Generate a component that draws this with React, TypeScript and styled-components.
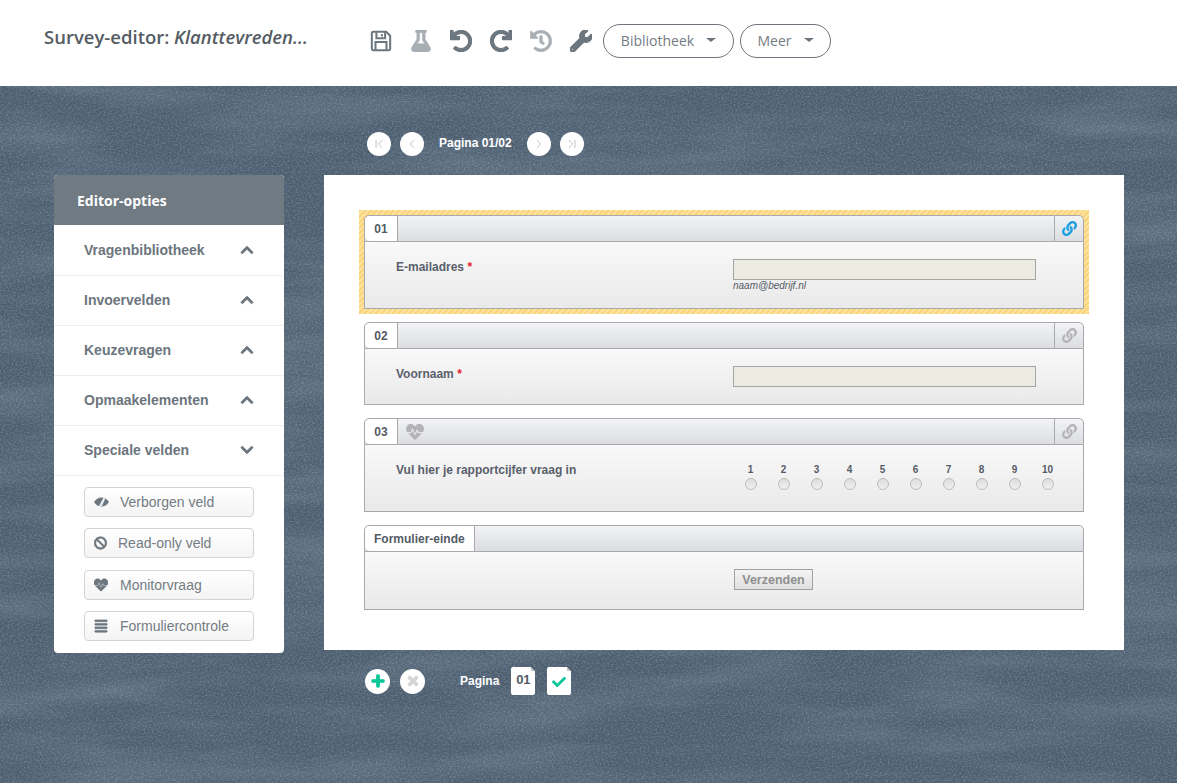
import type { ReactNode } from 'react';
import styled, { createGlobalStyle } from 'styled-components';
import {
  FaAlignJustify,
  FaBan,
  FaCheck,
  FaChevronDown,
  FaChevronUp,
  FaFlask,
  FaHeartbeat,
  FaHistory,
  FaLink,
  FaPlus,
  FaRedo,
  FaTimes,
  FaUndo,
  FaWrench,
} from 'react-icons/fa';
import { ChevronFirst, ChevronLast, ChevronLeft, ChevronRight } from 'lucide-react';

const slate = `url("data:image/svg+xml,%3Csvg xmlns='http://www.w3.org/2000/svg' width='1177' height='700'%3E%3Cfilter id='a'%3E%3CfeTurbulence type='fractalNoise' baseFrequency='.005 .03' numOctaves='4' seed='7'/%3E%3CfeColorMatrix values='0 0 0 0 .2 0 0 0 0 .26 0 0 0 0 .32 0 0 0 .9 -.36'/%3E%3C/filter%3E%3Cfilter id='b'%3E%3CfeTurbulence type='fractalNoise' baseFrequency='.5 .65' numOctaves='3' seed='3'/%3E%3CfeColorMatrix values='0 0 0 0 .56 0 0 0 0 .64 0 0 0 0 .72 0 0 0 .6 -.24'/%3E%3C/filter%3E%3Crect width='1177' height='700' filter='url(%23a)'/%3E%3Crect width='1177' height='700' filter='url(%23b)'/%3E%3C/svg%3E")`;

const GlobalStyle = createGlobalStyle`
  html, body {
    margin: 0;
    padding: 0;
    height: 100%;
  }
  body {
    font-family: "Liberation Sans", Arial, sans-serif;
    overflow: hidden;
  }
`;

// layout
const Page = styled.div`
  display: flex;
  flex-direction: column;
  width: 1177px;
  height: 783px;
`;

const Main = styled.main`
  flex: 1;
  display: flex;
  align-items: flex-start;
  gap: 40px;
  padding-left: 54px;
  background-color: #4c5e70;
  background-image: ${slate};
`;

// header
const Header = styled.header`
  display: flex;
  align-items: center;
  height: 86px;
  padding-left: 44px;
  background: #fff;
`;

const Title = styled.h1`
  width: 326px;
  margin: 0 0 14px;
  font-family: "Open Sans", sans-serif;
  font-size: 18.5px;
  font-weight: 600;
  color: #555c63;
  white-space: nowrap;

  em {
    font-weight: 600;
  }
`;

const Tools = styled.div`
  display: flex;
  align-items: center;
  margin-top: -4px;
`;

const Tool = styled.span<{ $muted?: boolean }>`
  display: flex;
  justify-content: center;
  width: 22px;
  margin-right: 18px;
  font-size: 22px;
  color: ${(p) => (p.$muted ? '#a7aeb4' : '#6c767e')};

  &:last-of-type {
    margin-right: 11px;
  }

  svg {
    stroke: currentColor;
    stroke-width: ${(p) => (p.$muted ? 12 : 24)}px;
  }
`;

const MenuButton = styled.button<{ $width: number }>`
  display: flex;
  align-items: center;
  justify-content: center;
  gap: 12px;
  width: ${(p) => p.$width}px;
  height: 34px;
  margin-right: 6px;
  padding: 0 0 2px;
  background: #fff;
  border: 1px solid #6c757d;
  border-radius: 17px;
  font-family: "Open Sans", sans-serif;
  font-size: 14px;
  color: #737c84;

  &::after {
    content: '';
    border-top: 4.5px solid #6c757d;
    border-left: 5px solid transparent;
    border-right: 5px solid transparent;
  }
`;

// sidebar
const Sidebar = styled.aside`
  width: 230px;
  margin-top: 89px;
  background: #fff;
  border-radius: 4px;
  overflow: hidden;
`;

const SidebarTitle = styled.div`
  height: 50px;
  margin-bottom: 1px;
  padding-left: 23px;
  background: #6f7a82;
  font-family: "Open Sans", sans-serif;
  font-size: 14px;
  font-weight: 700;
  line-height: 52px;
  color: #fff;
`;

const SectionRow = styled.div`
  display: flex;
  align-items: center;
  justify-content: space-between;
  height: 50px;
  padding: 0 30px 2px;
  border-bottom: 1px solid #eeeeee;
  box-sizing: border-box;
  font-size: 14px;
  font-weight: 700;
  color: #6c757d;

  svg {
    font-size: 14px;
    stroke: currentColor;
    stroke-width: 30px;
  }
`;

const FieldList = styled.div`
  display: flex;
  flex-direction: column;
  gap: 11.33px;
  padding: 11px 30px 12px;
`;

const FieldButton = styled.button`
  display: flex;
  align-items: center;
  width: 170px;
  height: 30px;
  padding: 0 9px;
  background: linear-gradient(#ffffff, #f4f4f4);
  border: 1px solid #d4d4d4;
  border-radius: 4px;
  font-family: "Liberation Sans", sans-serif;
  font-size: 14px;
  color: #737c84;
`;

const FieldIcon = styled.span<{ $width: number }>`
  display: flex;
  flex: none;
  width: ${(p) => p.$width}px;
  margin-right: 11px;
  font-size: 14px;
  color: #6c767e;

  svg {
    stroke: currentColor;
    stroke-width: 24px;
  }
`;

const HiddenEye = styled.svg`
  && {
    stroke-width: 0;
  }
`;

// survey
const Column = styled.div`
  display: flex;
  flex-direction: column;
  width: 800px;
`;

const PagerRow = styled.nav`
  display: flex;
  align-items: center;
  gap: 9px;
  height: 89px;
  padding: 27px 0 0 43px;
  box-sizing: border-box;
  color: #fff;
`;

const RoundButton = styled.span`
  display: flex;
  align-items: center;
  justify-content: center;
  width: 24px;
  height: 24px;
  flex: none;
  background: #fff;
  border-radius: 50%;
  color: #b5b5b5;
`;

const PagerLabel = styled.span`
  margin: -3px 6px 0 6px;
  font-size: 12px;
  font-weight: 700;
  white-space: nowrap;
`;

const Canvas = styled.section`
  display: flex;
  flex-direction: column;
  gap: 13px;
  height: 475px;
  padding: 40px;
  box-sizing: border-box;
  background: #fff;
`;

const Block = styled.article<{ $selected?: boolean }>`
  position: relative;

  ${(p) =>
    p.$selected &&
    `&::before {
      content: '';
      position: absolute;
      inset: -5px;
      background: repeating-linear-gradient(135deg, #fbd477 0 2px, #fde3a2 2px 4px);
    }`}
`;

const BlockHead = styled.div`
  position: relative;
  display: flex;
  align-items: stretch;
  height: 27px;
  box-sizing: border-box;
  background: linear-gradient(#f2f3f5, #dcdde1);
  border: 1px solid #a9a9ad;
  border-radius: 5px 5px 0 0;
`;

const BlockTab = styled.span`
  display: flex;
  align-items: center;
  justify-content: center;
  min-width: 33px;
  padding: 0 9px;
  box-sizing: border-box;
  background: #fff;
  border-right: 1px solid #a9a9ad;
  border-radius: 5px 0 0 5px;
  font-size: 12px;
  font-weight: 700;
  color: #555b66;
`;

const MonitorIcon = styled.span`
  display: flex;
  align-items: center;
  margin-left: 8px;
  font-size: 18px;
  color: #b3b3b5;
`;

const LinkCell = styled.span<{ $active?: boolean }>`
  display: flex;
  align-items: center;
  justify-content: center;
  width: 28px;
  margin-left: auto;
  border-left: 1px solid #a9a9ad;
  font-size: 15px;
  color: ${(p) => (p.$active ? '#1c9fe2' : '#b5b5b7')};
`;

const BlockBody = styled.div<{ $height: number }>`
  position: relative;
  display: flex;
  height: ${(p) => p.$height}px;
  padding: 17px 0 0 31px;
  box-sizing: border-box;
  background: linear-gradient(#f9f9f9, #e9e9ea);
  border: 1px solid #a9a9ad;
  border-top: 0;
`;

const FieldLabel = styled.label`
  width: 337px;
  flex: none;
  font-size: 12px;
  font-weight: 700;
  line-height: 16px;
  color: #5a606b;

  b {
    color: #e8222c;
  }
`;

const InputGroup = styled.div`
  display: flex;
  flex-direction: column;
`;

const TextInput = styled.div`
  width: 303px;
  height: 21px;
  box-sizing: border-box;
  background: #ecebe2;
  border: 1px solid #a5a5a5;
`;

const Hint = styled.span`
  font-size: 10px;
  font-style: italic;
  line-height: 12px;
  color: #555b66;
`;

const Scale = styled.div`
  display: flex;
  margin-left: 1px;
  padding-top: 1px;
`;

const ScaleItem = styled.div`
  display: flex;
  flex-direction: column;
  align-items: center;
  gap: 1px;
  width: 33px;
  font-size: 10px;
  font-weight: 700;
  line-height: 14px;
  color: #555b66;
`;

const Radio = styled.span`
  width: 12px;
  height: 12px;
  box-sizing: border-box;
  background: linear-gradient(#dedede, #efefef);
  border: 1px solid #bcbcbc;
  border-radius: 50%;
`;

const SubmitButton = styled.button`
  width: 79px;
  height: 21px;
  margin-left: 338px;
  padding: 0;
  background: linear-gradient(#f4f4f4, #dfdfdf);
  border: 1px solid #a0a0a0;
  font-family: "Liberation Sans", sans-serif;
  font-size: 12.5px;
  font-weight: 700;
  color: #8f8f8f;
`;

// footer toolbar
const PageTools = styled.div`
  display: flex;
  align-items: center;
  gap: 10px;
  padding: 17px 0 0 41px;
`;

const ActionButton = styled(RoundButton)<{ $color: string }>`
  width: 25px;
  height: 25px;
  font-size: 14px;
  color: ${(p) => p.$color};

  svg {
    stroke: currentColor;
    stroke-width: 40px;
  }
`;

const PageLabel = styled.span`
  margin: 0 2px 0 25px;
  font-size: 12px;
  font-weight: 700;
  color: #fff;
`;

const PageDoc = styled.span`
  position: relative;
  display: flex;
  align-items: center;
  justify-content: center;
  width: 24px;
  height: 28px;
  margin-right: 2px;
  padding-bottom: 4px;
  box-sizing: border-box;
  background: #fff;
  border-radius: 2px;
  font-size: 13px;
  font-weight: 700;
  color: #555b66;

  &::after {
    content: '';
    position: absolute;
    top: 0;
    right: 0;
    border-top: 4px solid #4c5e70;
    border-left: 4px solid #c9c9c9;
  }
`;

const DocCheck = styled.span`
  display: flex;
  padding-top: 6px;
  font-size: 14px;
  color: #0cc79a;
`;

const SaveIcon = () => (
  <svg width="22" height="22" viewBox="0 0 24 24" fill="none" style={{ strokeWidth: 2.2 }}>
    <path d="M3.5 2h14.2L22 6.3V20.500a1.500 1.500 0 0 1-1.500 1.500h-17A1.500 1.500 0 0 1 2 20.500v-17A1.500 1.500 0 0 1 3.500 2z" />
    <path d="M7 2.500v6.500h9.500V2.500M6 21.500v-8.500h12v8.500" />
    <path d="M13 4.500v2.500" />
  </svg>
);

const EyeIcon = () => (
  <HiddenEye width="15" height="14" viewBox="0 0 15 14">
    <path d="M0 7c2-3 4.500-4.500 7.500-4.500S13 4 15 7c-2 3-4.500 4.500-7.500 4.500S2 10 0 7z" fill="currentColor" />
    <path d="M5 12.500L11 1.500" stroke="#f9f9f9" strokeWidth="1.500" fill="none" />
    <path d="M7.500 11L10.500 4" stroke="#f9f9f9" strokeWidth="1" fill="none" />
  </HiddenEye>
);

interface SurveyBlockProps {
  tab: string;
  height: number;
  selected?: boolean;
  monitor?: boolean;
  link?: boolean;
  children: ReactNode;
}

const SurveyBlock = ({ tab, height, selected, monitor, link = true, children }: SurveyBlockProps) => (
  <Block $selected={selected}>
    <BlockHead>
      <BlockTab>{tab}</BlockTab>
      {monitor && (
        <MonitorIcon>
          <FaHeartbeat />
        </MonitorIcon>
      )}
      {link && (
        <LinkCell $active={selected}>
          <FaLink />
        </LinkCell>
      )}
    </BlockHead>
    <BlockBody $height={height}>{children}</BlockBody>
  </Block>
);

const sections = ['Vragenbibliotheek', 'Invoervelden', 'Keuzevragen', 'Opmaakelementen'];
const scale = [1, 2, 3, 4, 5, 6, 7, 8, 9, 10];

const App = () => (
  <Page>
    <GlobalStyle />
    <Header>
      <Title>
        Survey-editor: <em>Klanttevreden...</em>
      </Title>
      <Tools>
        <Tool>
          <SaveIcon />
        </Tool>
        <Tool $muted>
          <FaFlask />
        </Tool>
        <Tool>
          <FaUndo />
        </Tool>
        <Tool>
          <FaRedo />
        </Tool>
        <Tool $muted>
          <FaHistory />
        </Tool>
        <Tool>
          <FaWrench />
        </Tool>
        <MenuButton $width={131}>Bibliotheek</MenuButton>
        <MenuButton $width={91}>Meer</MenuButton>
      </Tools>
    </Header>
    <Main>
      <Sidebar>
        <SidebarTitle>Editor-opties</SidebarTitle>
        {sections.map((name) => (
          <SectionRow key={name}>
            {name}
            <FaChevronUp />
          </SectionRow>
        ))}
        <SectionRow>
          Speciale velden
          <FaChevronDown />
        </SectionRow>
        <FieldList>
          <FieldButton>
            <FieldIcon $width={15}>
              <EyeIcon />
            </FieldIcon>
            Verborgen veld
          </FieldButton>
          <FieldButton>
            <FieldIcon $width={13}>
              <FaBan />
            </FieldIcon>
            Read-only veld
          </FieldButton>
          <FieldButton>
            <FieldIcon $width={15}>
              <FaHeartbeat />
            </FieldIcon>
            Monitorvraag
          </FieldButton>
          <FieldButton>
            <FieldIcon $width={15}>
              <FaAlignJustify />
            </FieldIcon>
            Formuliercontrole
          </FieldButton>
        </FieldList>
      </Sidebar>
      <Column>
        <PagerRow>
          <RoundButton>
            <ChevronFirst size={14} strokeWidth={1.5} />
          </RoundButton>
          <RoundButton>
            <ChevronLeft size={14} strokeWidth={1.5} />
          </RoundButton>
          <PagerLabel>Pagina 01/02</PagerLabel>
          <RoundButton>
            <ChevronRight size={14} strokeWidth={1.5} />
          </RoundButton>
          <RoundButton>
            <ChevronLast size={14} strokeWidth={1.5} />
          </RoundButton>
        </PagerRow>
        <Canvas>
          <SurveyBlock tab="01" height={67} selected>
            <FieldLabel>
              E-mailadres <b>*</b>
            </FieldLabel>
            <InputGroup>
              <TextInput />
              <Hint>naam@bedrijf.nl</Hint>
            </InputGroup>
          </SurveyBlock>
          <SurveyBlock tab="02" height={56}>
            <FieldLabel>
              Voornaam <b>*</b>
            </FieldLabel>
            <InputGroup>
              <TextInput />
            </InputGroup>
          </SurveyBlock>
          <SurveyBlock tab="03" height={67} monitor>
            <FieldLabel>Vul hier je rapportcijfer vraag in</FieldLabel>
            <Scale>
              {scale.map((n) => (
                <ScaleItem key={n}>
                  {n}
                  <Radio />
                </ScaleItem>
              ))}
            </Scale>
          </SurveyBlock>
          <SurveyBlock tab="Formulier-einde" height={58} link={false}>
            <SubmitButton>Verzenden</SubmitButton>
          </SurveyBlock>
        </Canvas>
        <PageTools>
          <ActionButton $color="#0cc79a">
            <FaPlus />
          </ActionButton>
          <ActionButton $color="#d6d6d6">
            <FaTimes />
          </ActionButton>
          <PageLabel>Pagina</PageLabel>
          <PageDoc>01</PageDoc>
          <PageDoc>
            <DocCheck>
              <FaCheck />
            </DocCheck>
          </PageDoc>
        </PageTools>
      </Column>
    </Main>
  </Page>
);

export default App;
